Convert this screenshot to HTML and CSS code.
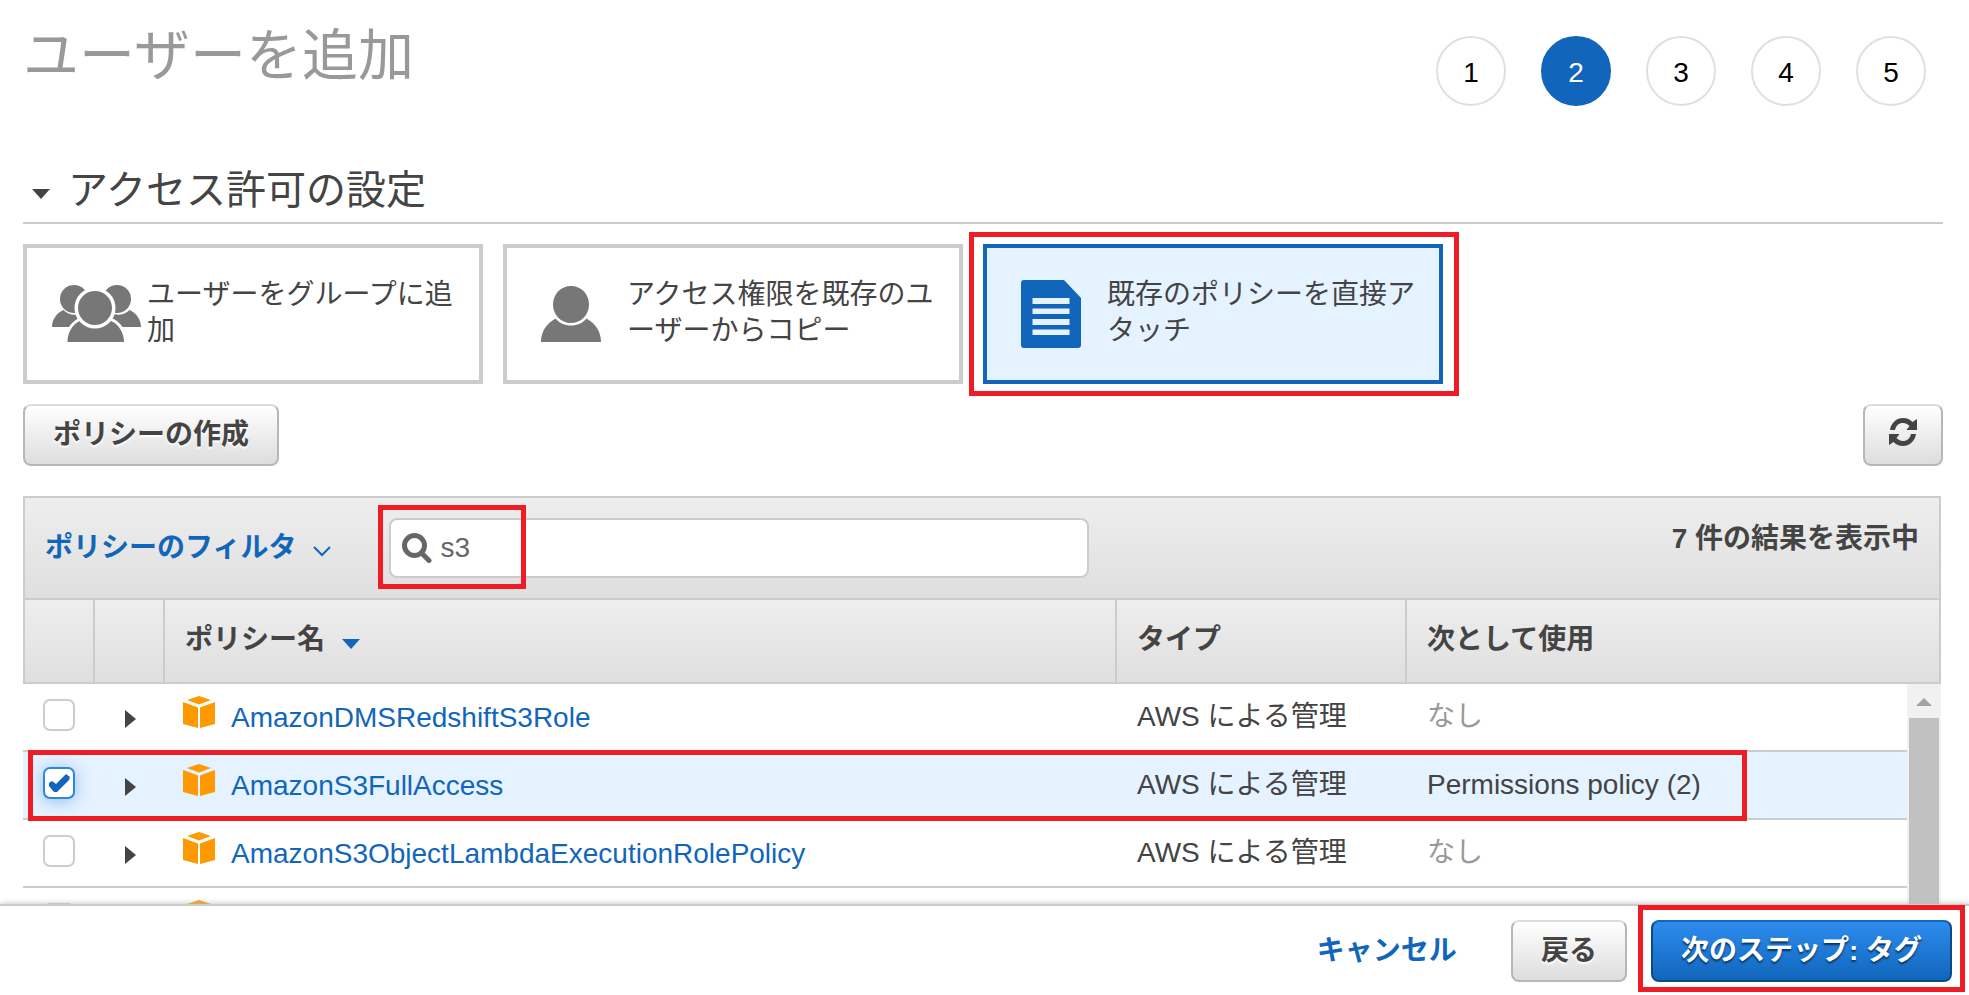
FILE: index.html
```html
<!DOCTYPE html>
<html lang="ja">
<head>
<meta charset="utf-8">
<title>ユーザーを追加</title>
<link rel="stylesheet" href="styles.css">
</head>
<body>
<svg class="sprite" aria-hidden="true">
  <symbol id="cube" viewBox="0 0 32 32">
    <path d="M4 4 16 0 28 4 16 8.500z"/>
    <path d="M0 6 15 11.500V32L0 28z"/>
    <path d="M32 6 17 11.500V32L32 28z"/>
  </symbol>
  <symbol id="person" viewBox="0 0 60 56">
    <path d="M30 0C40 0 48 8 48 18.500S40 37 30 37 12 29 12 18.500 20 0 30 0z"/>
    <path d="M14.500 32.500C18 37 24 39.500 30 39.500S42 37 45.500 32.500C55 38 60 46 60 56H0C0 46 5 38 14.500 32.500z"/>
  </symbol>
</svg>

<main class="page">
  <header class="page-header">
    <h1 class="page-title">ユーザーを追加</h1>
    <ol class="steps">
      <li class="step">1</li>
      <li class="step step-active" aria-current="step">2</li>
      <li class="step">3</li>
      <li class="step">4</li>
      <li class="step">5</li>
    </ol>
  </header>

  <h2 class="section-title"><span class="caret-down"></span>アクセス許可の設定</h2>

  <div class="options">
    <button class="option" type="button">
      <span class="option-icon">
        <svg class="group" width="88" height="58" viewBox="-5 0 88 58">
          <path d="M0 42C0 34 5 28 11.500 25 16 30 24 31 30 28V42z"/>
          <path d="M89 42C89 34 84 28 77.500 25 73 30 65 31 59 28V42z"/>
          <circle cx="22" cy="14" r="14"/>
          <circle cx="65" cy="14" r="14"/>
          <path class="option-gap" d="M15 57C15 47 21 38 29 35 36 44 51 44 58 35 67 38 72 47 72 57z"/>
          <path d="M15.500 57C15.500 48 20 39 29 35.500 36 43.500 51 43.500 58 35.500 67 39 72 48 72 57z"/>
          <circle class="option-gap" cx="43" cy="23" r="18"/>
          <circle cx="43" cy="23" r="17"/>
        </svg>
      </span>
      <span class="option-label">ユーザーをグループに追加</span>
    </button>
    <button class="option" type="button">
      <span class="option-icon"><svg width="60" height="56"><use href="#person"/></svg></span>
      <span class="option-label">アクセス権限を既存のユーザーからコピー</span>
    </button>
    <button class="option option-selected" type="button" aria-pressed="true">
      <span class="option-icon">
        <svg width="60" height="68" viewBox="0 0 60 68">
          <path fill-rule="evenodd" d="M3 0H43L60 18V65Q60 68 57 68H3Q0 68 0 65V3Q0 0 3 0zM11.500 18V24H48.500V18zM11.500 28.500V34H48.500V28.500zM11.500 39V45H48.500V39zM11.500 49.500V55H48.500V49.500z"/>
        </svg>
      </span>
      <span class="option-label">既存のポリシーを直接アタッチ</span>
    </button>
  </div>

  <div class="toolbar">
    <button class="btn" type="button">ポリシーの作成</button>
    <button class="btn btn-icon" type="button" aria-label="更新">
      <svg width="28" height="28" viewBox="0 0 28 28">
        <path d="M1 12C2 4.500 8 0 14 0 18 0 21 1.500 23.500 4L28 1V12H17.500L20.500 8C18.500 6 16.500 5 14 5 10 5 7 7.500 6 12z"/>
        <path d="M27 16C26 23.500 20 28 14 28 10 28 7 26.500 4.500 24L0 27V16H10.500L7.500 20C9.500 22 11.500 23 14 23 18 23 21 20.500 22 16z"/>
      </svg>
    </button>
  </div>

  <section class="panel">
    <div class="filter-bar">
      <button class="filter-button" type="button">ポリシーのフィルタ
        <svg class="chevron" width="18" height="11" viewBox="0 0 18 11"><path d="M1 1 9 9 17 1"/></svg>
      </button>
      <div class="search">
        <svg class="search-icon" width="30" height="30" viewBox="0 0 30 30"><circle cx="12.500" cy="12.500" r="10"/><path d="M19.500 20 27 27.500"/></svg>
        <input class="search-input" type="text" value="s3" aria-label="検索">
      </div>
      <span class="result-count">7 件の結果を表示中</span>
    </div>

    <table class="grid grid-head">
      <colgroup><col class="col-check"><col class="col-expand"><col><col class="col-type"><col class="col-used-head"></colgroup>
      <thead>
        <tr><th></th><th></th><th>ポリシー名<span class="sort-caret"></span></th><th>タイプ</th><th>次として使用</th></tr>
      </thead>
    </table>
  </section>

  <div class="list">
    <table class="grid grid-body">
      <colgroup><col class="col-check-body"><col class="col-expand"><col><col class="col-type"><col class="col-used"></colgroup>
      <tbody>
        <tr>
          <td><input class="check" type="checkbox" aria-label="AmazonDMSRedshiftS3Role"></td>
          <td><button class="expand" type="button" aria-label="展開"></button></td>
          <td class="cell-policy"><div class="policy"><svg class="cube" width="32" height="32"><use href="#cube"/></svg><a class="policy-link" href="#">AmazonDMSRedshiftS3Role</a></div></td>
          <td>AWS による管理</td>
          <td class="muted">なし</td>
        </tr>
        <tr class="row-selected">
          <td><input class="check" type="checkbox" aria-label="AmazonS3FullAccess" checked></td>
          <td><button class="expand" type="button" aria-label="展開"></button></td>
          <td class="cell-policy"><div class="policy"><svg class="cube" width="32" height="32"><use href="#cube"/></svg><a class="policy-link" href="#">AmazonS3FullAccess</a></div></td>
          <td>AWS による管理</td>
          <td>Permissions policy (2)</td>
        </tr>
        <tr>
          <td><input class="check" type="checkbox" aria-label="AmazonS3ObjectLambdaExecutionRolePolicy"></td>
          <td><button class="expand" type="button" aria-label="展開"></button></td>
          <td class="cell-policy"><div class="policy"><svg class="cube" width="32" height="32"><use href="#cube"/></svg><a class="policy-link" href="#">AmazonS3ObjectLambdaExecutionRolePolicy</a></div></td>
          <td>AWS による管理</td>
          <td class="muted">なし</td>
        </tr>
        <tr>
          <td><input class="check" type="checkbox" aria-label="選択"></td>
          <td></td>
          <td class="cell-policy"><div class="policy"><svg class="cube" width="32" height="32"><use href="#cube"/></svg></div></td>
          <td></td>
          <td></td>
        </tr>
      </tbody>
    </table>
    <div class="scrollbar"><span class="scroll-arrow"></span><span class="scroll-thumb"></span></div>
  </div>
</main>

<footer class="footer">
  <a class="cancel" href="#">キャンセル</a>
  <button class="btn" type="button">戻る</button>
  <div class="next"><button class="btn btn-primary" type="button">次のステップ: タグ</button></div>
</footer>
</body>
</html>
```

FILE: styles.css
```css
*,
*::before,
*::after {
  box-sizing: border-box;
}

body {
  margin: 0;
  height: 100vh;
  display: flex;
  flex-direction: column;
  overflow: hidden;
  background: #fff;
  color: #444;
  font: 28px/36px "Liberation Sans", "Noto Sans CJK JP", sans-serif;
}

button,
input {
  font: inherit;
  color: inherit;
}

button {
  cursor: pointer;
}

a {
  color: #1166bb;
  text-decoration: none;
}

.sprite {
  position: absolute;
  width: 0;
  height: 0;
}

.page {
  flex: 1;
  min-height: 0;
  overflow: hidden;
  display: flex;
  flex-direction: column;
  padding: 20px 26px 0 23px;
}

.page > * {
  flex-shrink: 0;
}

.page-header {
  display: flex;
  justify-content: space-between;
  padding-right: 17px;
}

.page-title {
  margin: 0;
  font-size: 56px;
  line-height: 72px;
  font-weight: 400;
  color: #999;
}

.steps {
  display: flex;
  gap: 35px;
  margin: 16px 0 0;
  padding: 0;
  list-style: none;
}

.step {
  width: 70px;
  height: 70px;
  border: 2px solid #e0e0e0;
  border-radius: 50%;
  color: #000;
  line-height: 70px;
  text-align: center;
}

.step-active {
  border-color: #1166bb;
  background: #1166bb;
  color: #fff;
}

.section-title {
  display: flex;
  align-items: center;
  gap: 18px;
  margin: 52px 0 0;
  padding-left: 9px;
  border-bottom: 2px solid #ccc;
  font-size: 40px;
  line-height: 64px;
  font-weight: 400;
}

.caret-down,
.sort-caret {
  border: 9px solid transparent;
  border-top: 10px solid #444;
  border-bottom: 0;
}

.caret-down {
  margin-top: 8px;
}

.options {
  display: flex;
  gap: 20px;
  margin-top: 20px;
}

.option {
  position: relative;
  display: flex;
  align-items: center;
  width: 460px;
  height: 140px;
  padding: 0 16px 0 20px;
  border: 4px solid #ccc;
  background: #fff;
  text-align: left;
}

.option-icon {
  flex: none;
  display: flex;
  justify-content: center;
  width: 88px;
  margin-right: 12px;
  fill: #777;
}

.group {
  overflow: visible;
}

.option-label {
  flex: 1;
  padding-bottom: 2px;
  line-break: anywhere;
}

.option-gap {
  stroke: #fff;
  stroke-width: 5px;
}

.option-selected {
  border-color: #1166bb;
  background: #e5f2ff;
}

.option-selected .option-icon {
  fill: #1166bb;
}

.option-selected::after {
  content: "";
  position: absolute;
  inset: -16px -20px -16px -18px;
  border: 5px solid #ee1c25;
}

.toolbar {
  display: flex;
  justify-content: space-between;
  margin-top: 20px;
}

.btn {
  height: 62px;
  padding: 0 28px;
  border: 2px solid #b7b7b7;
  border-top-color: #ddd;
  border-radius: 8px;
  background: linear-gradient(#fff, #ddd);
  font-weight: 700;
  text-shadow: 0 2px 2px #fff;
}

.btn-icon {
  display: flex;
  justify-content: center;
  width: 80px;
  padding: 12px 0 0;
  align-items: flex-start;
  fill: #444;
}

.btn-primary {
  border-color: #0b4a8a;
  border-top-color: #1166bb;
  background: linear-gradient(#2e8cee, #1166bb);
  color: #fff;
  text-shadow: 0 2px 2px #063360;
}

.panel {
  margin: 30px 2px 0 0;
  border: 2px solid #ccc;
}

.filter-bar {
  display: flex;
  align-items: center;
  height: 100px;
  padding: 0 20px;
  background: linear-gradient(#eee, #dfdfdf);
}

.filter-button {
  display: flex;
  align-items: center;
  gap: 17px;
  margin-right: 58px;
  padding: 0;
  border: 0;
  background: none;
  color: #1166bb;
  font-weight: 700;
}

.chevron {
  margin-top: 6px;
  fill: none;
  stroke: #1166bb;
  stroke-width: 2px;
}

.search {
  position: relative;
  display: flex;
  align-items: center;
  gap: 8px;
  width: 700px;
  height: 60px;
  padding: 0 11px;
  border: 2px solid #ccc;
  border-radius: 8px;
  background: #fff;
}

.search::after {
  content: "";
  position: absolute;
  inset: -15px auto -13px -13px;
  width: 148px;
  border: 5px solid #ee1c25;
  pointer-events: none;
}

.search-icon {
  flex: none;
  fill: none;
  stroke: #666;
  stroke-width: 5px;
  stroke-linecap: round;
}

.search-input {
  flex: 1;
  min-width: 0;
  padding: 0;
  border: 0;
  outline: 0;
  background: none;
  color: #666;
}

.result-count {
  margin-left: auto;
  padding-bottom: 18px;
  font-weight: 700;
}

.grid {
  width: 100%;
  border-spacing: 0;
  table-layout: fixed;
}

.col-check,
.col-expand {
  width: 70px;
}

.col-check-body {
  width: 72px;
}

.col-type {
  width: 290px;
}

.col-used {
  width: 500px;
}

.col-used-head {
  width: 532px;
}

.grid th {
  height: 84px;
  padding: 0 20px 2px;
  border-top: 2px solid #ccc;
  border-right: 2px solid #ccc;
  background: linear-gradient(#eee, #dfdfdf);
  text-align: left;
}

.grid th:last-child {
  border-right: 0;
}

.sort-caret {
  display: inline-block;
  margin-left: 17px;
  border-top-color: #1166bb;
}

.list {
  position: relative;
  display: flex;
  margin-right: 2px;
}

.list::after {
  content: "";
  position: absolute;
  top: 66px;
  left: 5px;
  right: 194px;
  height: 71px;
  border: 5px solid #ee1c25;
  pointer-events: none;
}

.grid-body {
  flex: 1;
}

.grid td {
  height: 68px;
  padding: 0 20px;
  border-bottom: 2px solid #ccc;
}

.grid .cell-policy {
  padding-left: 18px;
}

.row-selected {
  background: #e5f2ff;
}

.grid .muted {
  color: #999;
}

.check {
  display: grid;
  place-content: center;
  appearance: none;
  width: 32px;
  height: 32px;
  margin: 0 0 4px;
  border: 2px solid #ccc;
  border-radius: 7px;
  background: #fff;
}

.check:checked {
  border-color: #2e86dd;
  box-shadow: 0 2px 16px #8ebdf0;
}

.check:checked::before {
  content: "";
  width: 22px;
  height: 18px;
  background: #1166bb;
  clip-path: path("M1 9 4 7 8 10 18 0 22 3 21 6 9 18 6 18 1 12z");
}

.expand {
  display: block;
  width: 11px;
  height: 18px;
  margin: 4px 0 0 10px;
  padding: 0;
  border: 0;
  background: #444;
  clip-path: polygon(0 0, 100% 50%, 0 100%);
}

.policy {
  display: flex;
  align-items: center;
  gap: 16px;
}

.cube {
  flex: none;
  margin-bottom: 10px;
  fill: #ff9900;
}

.policy-link {
  padding-top: 2px;
}

.scrollbar {
  display: flex;
  flex-direction: column;
  align-items: center;
  width: 34px;
  background: #f1f1f1;
}

.scroll-arrow {
  margin: 14px 0 12px;
  border: 8px solid transparent;
  border-top: 0;
  border-bottom: 8px solid #a3a3a3;
}

.scroll-thumb {
  flex: 1;
  width: 30px;
  background: #c1c1c1;
}

.footer {
  position: relative;
  flex: none;
  display: flex;
  align-items: center;
  padding: 14px 17px 13px;
  border-top: 2px solid #ccc;
  background: #fff;
  box-shadow: 0 0 6px #bbb;
}

.cancel {
  margin: 0 54px 0 auto;
  font-weight: 700;
}

.next {
  position: relative;
  margin-left: 24px;
}

.next::after {
  content: "";
  position: absolute;
  inset: -15px -13px -10px;
  border: 5px solid #ee1c25;
  pointer-events: none;
}
```
